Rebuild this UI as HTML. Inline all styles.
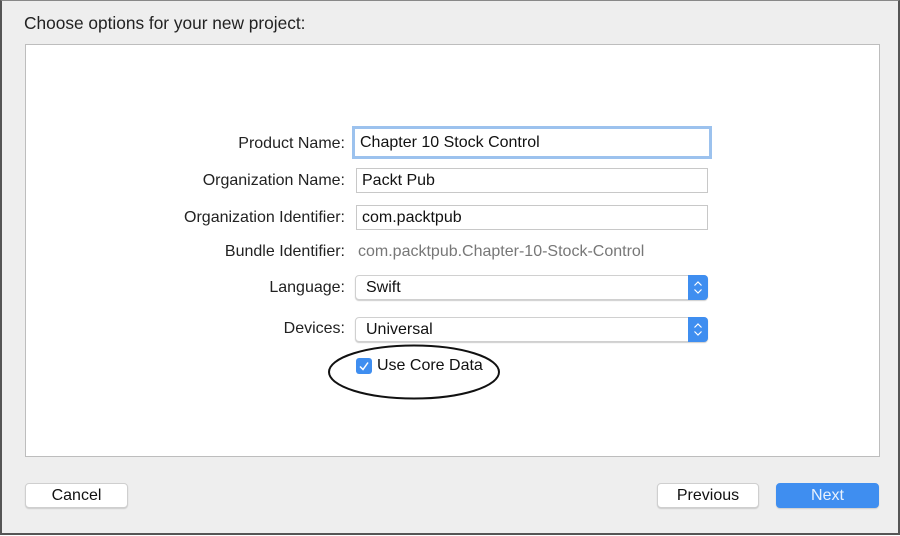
<!DOCTYPE html>
<html><head><style>
body{margin:0;width:900px;height:536px;overflow:hidden;font-family:"Liberation Sans",sans-serif;}
.frame{position:absolute;left:0;top:0;width:896px;height:532px;background:#eeeeee;border:2px solid #555;border-top:1px solid #888;}
.a{position:absolute;}
.title{left:24px;top:13px;font-size:17.3px;color:#222;}
.panel{left:25px;top:44px;width:853px;height:411px;background:#fff;border:1px solid #bdbdbd;}
.lbl{position:absolute;right:555px;font-size:16px;color:#222;text-align:right;white-space:nowrap;}
.fld{position:absolute;background:#fff;border:1px solid #c8c8c8;font-size:16px;color:#111;box-sizing:border-box;padding-left:5px;}
.pop{position:absolute;background:#fff;border:1px solid #d0d0d0;border-radius:4px;font-size:16px;color:#111;box-sizing:border-box;padding-left:10px;box-shadow:0 1px 1px #ccc;}
.step{position:absolute;right:-1px;top:-1px;width:20px;height:25px;background:#3f8ef0;border-radius:0 4px 4px 0;}
.btn{position:absolute;background:#fff;border:1px solid #cfcfcf;border-radius:4px;font-size:16px;text-align:center;box-sizing:border-box;height:25px;line-height:23px;color:#111;box-shadow:0 1px 1px #ccc;}
</style></head><body>
<div class="frame"></div>
<div class="a title">Choose options for your new project:</div>
<div class="a panel"></div>

<div class="lbl" style="top:135px">Product Name:</div>
<div class="fld" style="left:352px;top:126px;width:360px;height:33px;border:3px solid #9cc2ee;line-height:27px;padding-left:5px">Chapter 10 Stock Control</div>

<div class="lbl" style="top:172px">Organization Name:</div>
<div class="fld" style="left:356px;top:168px;width:352px;height:25px;line-height:23px">Packt Pub</div>

<div class="lbl" style="top:209px">Organization Identifier:</div>
<div class="fld" style="left:356px;top:205px;width:352px;height:25px;line-height:23px">com.packtpub</div>

<div class="lbl" style="top:243px">Bundle Identifier:</div>
<div class="a" style="left:358px;top:243px;font-size:16px;color:#777">com.packtpub.Chapter-10-Stock-Control</div>

<div class="lbl" style="top:279px">Language:</div>
<div class="pop" style="left:355px;top:275px;width:353px;height:25px;line-height:23px">Swift<div class="step"><svg width="20" height="25"><path d="M6.5 10.5l3.5-3.5 3.5 3.5M6.5 14.5l3.5 3.5 3.5-3.5" stroke="#fff" stroke-width="1.2" fill="none"/></svg></div></div>

<div class="lbl" style="top:320px">Devices:</div>
<div class="pop" style="left:355px;top:317px;width:353px;height:25px;line-height:23px">Universal<div class="step"><svg width="20" height="25"><path d="M6.5 10.5l3.5-3.5 3.5 3.5M6.5 14.5l3.5 3.5 3.5-3.5" stroke="#fff" stroke-width="1.2" fill="none"/></svg></div></div>

<div class="a" style="left:356px;top:358px;width:16px;height:16px;background:#3f8ef0;border-radius:3px"><svg width="16" height="16"><path d="M4 8.5l3 3 5-7" stroke="#fff" stroke-width="1.5" fill="none"/></svg></div>
<div class="a" style="left:377px;top:357px;font-size:16px;color:#111">Use Core Data</div>
<svg class="a" style="left:326px;top:343px" width="176" height="58"><ellipse cx="88" cy="29" rx="85" ry="26.5" fill="none" stroke="#111" stroke-width="2"/></svg>

<div class="btn" style="left:25px;top:483px;width:103px">Cancel</div>
<div class="btn" style="left:657px;top:483px;width:102px">Previous</div>
<div class="btn" style="left:776px;top:483px;width:103px;background:#3f8ef0;border-color:#3f8ef0;color:#e8f1fd">Next</div>
</body></html>
